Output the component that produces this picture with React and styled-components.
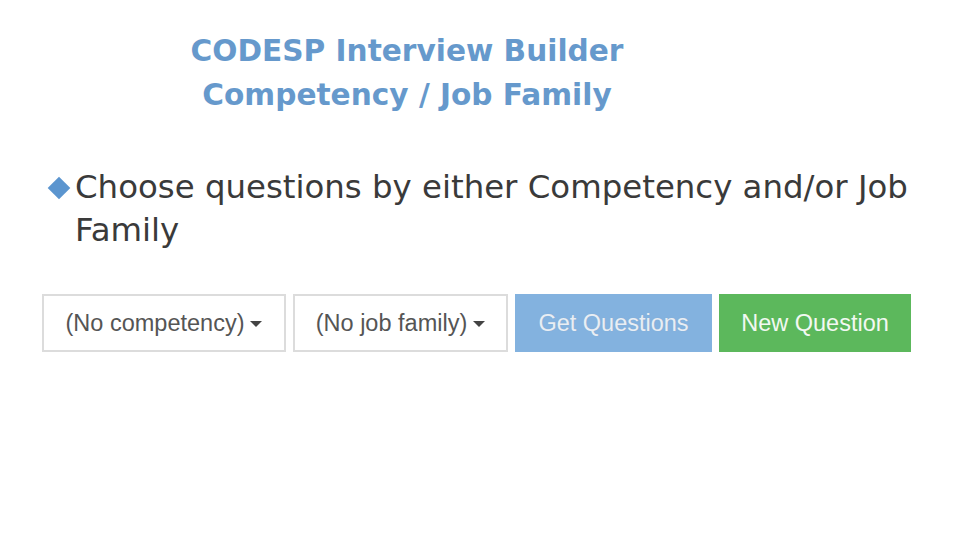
import React from "react";
import styled, { createGlobalStyle } from "styled-components";

const Global = createGlobalStyle`
  html, body { margin: 0; padding: 0; background: #fff; }
  body { width: 960px; height: 540px; overflow: hidden; }
`;

const Slide = styled.div`
  width: 960px;
  height: 540px;
  box-sizing: border-box;
  display: flex;
  flex-direction: column;
  padding: 29px 0 0 42px;
`;

const Title = styled.h1`
  margin: 0;
  width: 730px;
  text-align: center;
  font-family: "DejaVu Sans", sans-serif;
  font-weight: 700;
  font-size: 29.6px;
  line-height: 44px;
  color: #6699cc;
`;

const Bullets = styled.ul`
  list-style: none;
  margin: 49px 0 0 0;
  padding: 0;
`;

const Bullet = styled.li`
  position: relative;
  padding-left: 33px;
  font-family: "DejaVu Sans", sans-serif;
  font-size: 32.4px;
  line-height: 43px;
  color: #3a3a3a;
  &::before {
    content: "";
    position: absolute;
    left: 9px;
    top: 14px;
    width: 16px;
    height: 16px;
    background: #5b95cf;
    transform: rotate(45deg);
  }
`;

const Toolbar = styled.div`
  display: flex;
  gap: 7px;
  margin-top: 42px;
`;

const Select = styled.div`
  box-sizing: border-box;
  width: ${(p) => p.w}px;
  height: 58px;
  border: 2px solid #dcdcdc;
  background: #fff;
  display: flex;
  align-items: center;
  justify-content: center;
  gap: 6px;
  font-family: "Liberation Sans", Arial, sans-serif;
  font-size: 23.5px;
  color: #555;
`;

const Caret = styled.span`
  width: 0;
  height: 0;
  border-left: 6px solid transparent;
  border-right: 6px solid transparent;
  border-top: 6px solid #444;
  margin-top: 2px;
`;

const Button = styled.div`
  box-sizing: border-box;
  width: ${(p) => p.w}px;
  height: 58px;
  background: ${(p) => p.bg};
  display: flex;
  align-items: center;
  justify-content: center;
  font-family: "Liberation Sans", Arial, sans-serif;
  font-size: 23.5px;
  color: ${(p) => p.fg};
  text-shadow: ${(p) => (p.faded ? "0 0 1px #8da8c4" : "none")};
`;

export default function App() {
  return (
    <>
      <Global />
      <Slide>
        <Title>
          CODESP Interview Builder
          <br />
          Competency / Job Family
        </Title>
        <Bullets>
          <Bullet>
            Choose questions by either Competency and/or Job
            <br />
            Family
          </Bullet>
        </Bullets>
        <Toolbar>
          <Select w={244}>
            (No competency) <Caret />
          </Select>
          <Select w={215}>
            (No job family) <Caret />
          </Select>
          <Button w={197} bg="#83b2df" fg="#e8eef5" faded>
            Get Questions
          </Button>
          <Button w={192} bg="#5cb85c" fg="#f2f8f2">
            New Question
          </Button>
        </Toolbar>
      </Slide>
    </>
  );
}
